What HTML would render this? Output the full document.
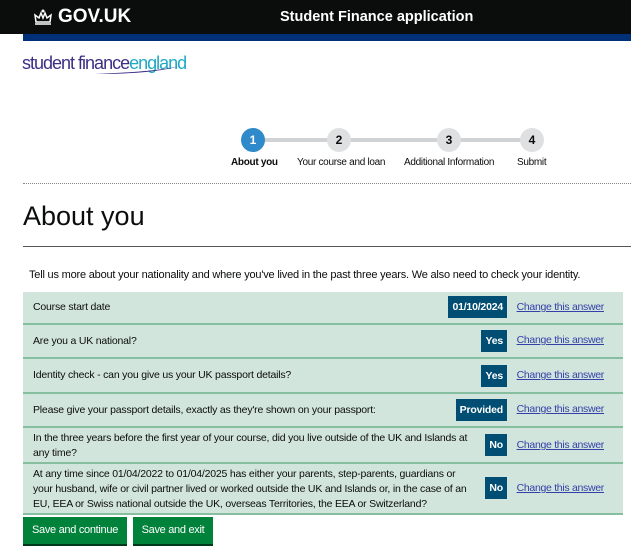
<!DOCTYPE html>
<html><head><style>
*{margin:0;padding:0;box-sizing:border-box}
body{width:631px;height:555px;overflow:hidden;background:#fff;font-family:"Liberation Sans Narrow","Liberation Sans",sans-serif;color:#0b0c0c;position:relative}
.a{position:absolute}
.hdr{left:0;top:0;width:631px;height:34px;background:#0b0c0c;color:#fff}
.row{position:absolute;left:23px;width:600px;background:#d2e5dc;border-bottom:2px solid #85bf9f;font-size:10.5px;letter-spacing:-0.2px}
.row .q{position:absolute;left:10px;line-height:15px}
.badge{position:absolute;background:#004e73;color:#fff;font-weight:bold;font-size:10.5px;height:22px;line-height:22px;padding:0 4px;right:116px}
.lnk{position:absolute;right:19px;color:#3340a8;text-decoration:underline;font-size:10.5px;letter-spacing:-0.3px}
.btn{position:absolute;top:517px;height:29px;background:#00823b;color:#fff;font-size:11px;line-height:26px;text-align:center;border-bottom:2px solid #003a1a;letter-spacing:-0.3px}
.c{position:absolute;width:24px;height:24px;border-radius:50%;background:#dee0e2;top:128px;text-align:center;line-height:24px;font-size:12px;font-weight:bold}
.l{position:absolute;top:157px;font-size:10px;white-space:nowrap;letter-spacing:-0.3px}
</style></head><body>
<div class="a hdr">
<svg class="a" style="left:33px;top:9px" width="20" height="17" viewBox="0 0 20 17"><path d="M2 15h16M3 13l-1-7 4 3 2-5 2 5 2-5 2 5 4-3-1 7z" fill="none" stroke="#fff" stroke-width="1.5"/><circle cx="10" cy="2" r="1.5" fill="#fff"/></svg>
<div class="a" style="left:58px;top:6px;font-family:'Liberation Sans',sans-serif;font-weight:bold;font-size:19px">GOV.UK</div>
<div class="a" style="left:280px;top:9px;font-family:'Liberation Sans',sans-serif;font-weight:bold;font-size:14.5px">Student Finance application</div>
</div>
<div class="a" style="left:23px;top:34px;width:608px;height:7px;background:#003078"></div>
<div class="a" style="left:22px;top:53px;font-size:18px;letter-spacing:-1px;color:#3d2e84">student finance<span style="color:#1fa9c4">england</span></div>
<svg class="a" style="left:90px;top:62px" width="100" height="14"><path d="M5 12 Q70 12 96 2 Q80 9 5 12z" fill="#3d2e84"/></svg>
<div class="a" style="left:253px;top:138px;width:280px;height:4px;background:#cfd3d6"></div>
<div class="c" style="left:241px;background:#2e8acb;color:#fff">1</div>
<div class="c" style="left:327px">2</div>
<div class="c" style="left:437px">3</div>
<div class="c" style="left:520px">4</div>
<div class="l" style="left:231px;font-weight:bold">About you</div>
<div class="l" style="left:297px">Your course and loan</div>
<div class="l" style="left:404px">Additional Information</div>
<div class="l" style="left:517px">Submit</div>
<div class="a" style="left:23px;top:183px;width:608px;border-top:1px dotted #888"></div>
<div class="a" style="left:23px;top:201px;font-family:'Liberation Sans',sans-serif;font-size:27px">About you</div>
<div class="a" style="left:23px;top:246px;width:608px;height:1px;background:#555"></div>
<div class="a" style="left:29px;top:269px;font-family:'Liberation Sans',sans-serif;font-size:11px;letter-spacing:-0.2px">Tell us more about your nationality and where you've lived in the past three years. We also need to check your identity.</div>
<div class="row" style="top:292px;height:33px"><div class="q" style="top:8px">Course start date</div><div class="badge" style="top:4px">01/10/2024</div><div class="lnk" style="top:9px">Change this answer</div></div>
<div class="row" style="top:325px;height:34px"><div class="q" style="top:9px">Are you a UK national?</div><div class="badge" style="top:5px">Yes</div><div class="lnk" style="top:9px">Change this answer</div></div>
<div class="row" style="top:359px;height:35px"><div class="q" style="top:9px">Identity check - can you give us your UK passport details?</div><div class="badge" style="top:6px">Yes</div><div class="lnk" style="top:10px">Change this answer</div></div>
<div class="row" style="top:394px;height:34px"><div class="q" style="top:9px">Please give your passport details, exactly as they're shown on your passport:</div><div class="badge" style="top:5px">Provided</div><div class="lnk" style="top:9px">Change this answer</div></div>
<div class="row" style="top:428px;height:36px"><div class="q" style="top:3px;width:445px">In the three years before the first year of your course, did you live outside of the UK and Islands at any time?</div><div class="badge" style="top:6px">No</div><div class="lnk" style="top:11px">Change this answer</div></div>
<div class="row" style="top:464px;height:51px"><div class="q" style="top:3px;width:440px">At any time since 01/04/2022 to 01/04/2025 has either your parents, step-parents, guardians or your husband, wife or civil partner lived or worked outside the UK and Islands or, in the case of an EU, EEA or Swiss national outside the UK, overseas Territories, the EEA or Switzerland?</div><div class="badge" style="top:13px">No</div><div class="lnk" style="top:18px">Change this answer</div></div>
<div class="btn" style="left:23px;width:104px">Save and continue</div>
<div class="btn" style="left:133px;width:80px">Save and exit</div>
</body></html>
